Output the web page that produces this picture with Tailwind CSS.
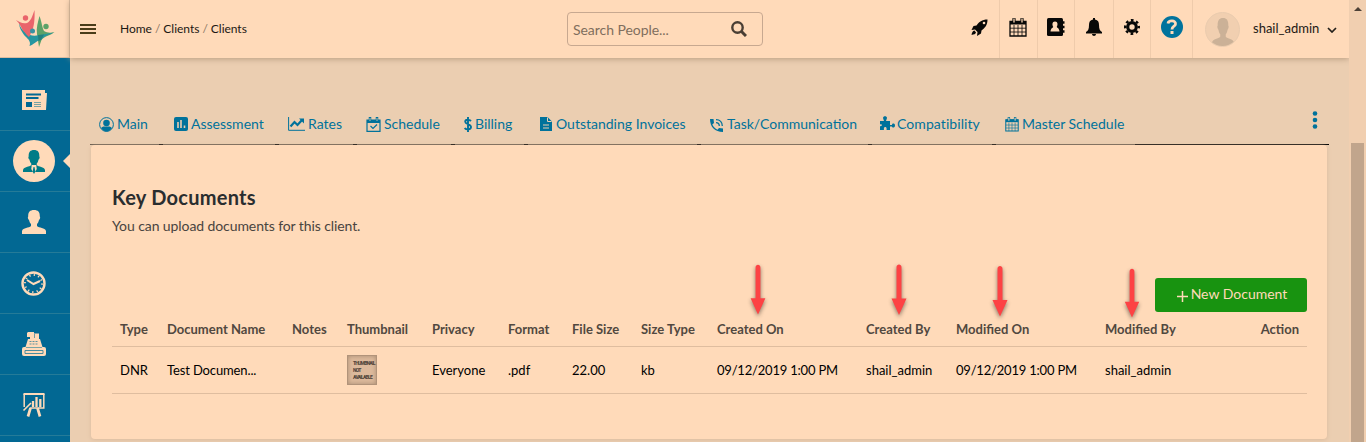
<!DOCTYPE html>
<html lang="en">
<head>
<meta charset="utf-8">
<title>Key Documents</title>
<script src="https://cdn.jsdelivr.net/npm/@tailwindcss/browser@4"></script>
</head>
<body class="relative h-[442px] w-[1366px] overflow-hidden bg-[#ebceb1] font-['Lato',sans-serif] text-sm text-black">
<svg class="hidden">
  <symbol id="person" viewBox="0 0 24 24"><path d="M12 0C8 0 6 2 6.200 6.500C5.400 7 6 9.500 7 10C7.500 12 8 13 9 14V16C7 18 1 17.500 0 21V24H24V21C23 17.500 17 18 15 16V14C16 13 16.500 12 17 10C18 9.500 18.600 7 17.800 6.500C18 2 16 0 12 0Z"/></symbol>
  <symbol id="arrow" viewBox="0 0 16 52"><path d="M5.500 3.500C5.500 0 10.500 0 10.500 3.500V35H15.500L8 51.500L.5 35H5.500Z" fill="#fd4244"/></symbol>
  <symbol id="calendar" viewBox="0 0 18 19"><path d="M1 3.500H17V18H1Z" fill="none" stroke="currentColor" stroke-width="1.300"/><path d="M1 3H17V6.500H1Z"/><path d="M1 10.200H17M1 14H17M5 7V18M9 7V18M13 7V18" stroke="currentColor" fill="none" stroke-width=".8"/><path d="M5 1V4M13 1V4" stroke="currentColor" stroke-width="3.200" stroke-linecap="round"/><path d="M5 1V4M13 1V4" stroke="#ffdab9" stroke-width="1.300" stroke-linecap="round"/></symbol>
</svg>

<div class="flex h-full">
  <aside class="flex w-[70px] flex-none flex-col bg-[#026893] text-[#ffdab9]">
    <div class="flex h-[58px] flex-none items-center justify-center border-r border-b border-[#dabb9f] bg-[#ffdab9]">
      <svg class="h-[37px] w-[40px]" viewBox="0 0 40 37">
        <circle cx="10.500" cy="8" r="2.700" fill="#e9646b"/><path d="M1 10C5 12 7 14 12 13C16 11 17 7 19.500 0C20 9 19 17 17 21L13 29L8 21C6 17 5 14 1 10Z" fill="#e9646b"/>
        <circle cx="31" cy="16.500" r="2.700" fill="#5ca268"/><path d="M24.500 6C27 13 27 17 29 21C32 23 36 23 39.500 22C35 26 29 26 26.500 30L24 37L22 24C21 18 23 12 24.500 6Z" fill="#5ca268"/>
        <path d="M4 13C6 20 10 23 15 25C21 27 29 24 39 22.500C31 26 29 26 26 30C22 30 18 35 14.500 36C16 32 14 30 11 27C7 23 4 17 4 13Z" fill="#2696a0"/><path d="M7 15C9 20 12 23 15.500 24.500L14 27C10 24 8 20 7 15Z" fill="#e9646b"/><circle cx="17.500" cy="21" r="2.500" fill="#3b91a2"/><path d="M23 25L29 24.500L26 30L23.500 31Z" fill="#25807d"/>
      </svg>
    </div>
    <nav class="flex flex-col pr-0">
      <div class="flex h-[73px] items-center justify-center border-b border-[#257b98] pt-[11px] pr-[1px]">
        <svg class="h-[20px] w-[25px]" viewBox="0 0 25 20" fill="currentColor"><path d="M0 0H23V3H25L24 20H0Z"/><path d="M4 4.500H19M4 8H16.500" stroke="#026893" stroke-width="1.800"/><path d="M4 12H10V17H4Z" fill="#026893"/><path d="M12 12.500H19M12 14.500H19M12 16.500H19" stroke="#77a2a4" stroke-width="1"/></svg>
      </div>
      <div class="flex h-[61px] items-center justify-between border-b border-[#257b98] pl-[13px]">
        <div class="flex size-[42px] items-center justify-center rounded-full bg-[#ffdab9]">
          <svg class="mt-[2px] h-[24px] w-[22px] text-[#007c87]" viewBox="0 0 24 24" preserveAspectRatio="none" fill="currentColor"><path d="M12 0C8 0 6 2 6.200 6.500C5.400 7 6 9 7 9.500C7.500 11.500 8 12.500 9 13.500V15C7 17 1 16.500 0 20V22H24V20C23 16.500 17 17 15 15V13.500C16 12.500 16.500 11.500 17 9.500C18 9 18.600 7 17.800 6.500C18 2 16 0 12 0Z"/><path d="M9.500 15L9 19L12 24L15 19L14.500 15Z" fill="#ffdab9"/><path d="M11.500 17H12.500L13.500 21.500L12 24L10.500 21.500Z"/></svg>
        </div>
        <div class="h-0 w-0 border-y-[7px] border-r-[7px] border-y-transparent border-r-[#ffdab9]"></div>
      </div>
      <div class="flex h-[61px] items-center justify-center border-b border-[#257b98] pr-[2px]"><svg class="size-[24px]" fill="currentColor"><use href="#person"/></svg></div>
      <div class="flex h-[61px] items-center justify-center border-b border-[#257b98] pr-[3px]">
        <svg class="size-[25px]" viewBox="0 0 25 25" fill="none" stroke="currentColor"><circle cx="12.500" cy="12.500" r="11" stroke-width="2.400"/><circle cx="12.500" cy="12.500" r="8.500" stroke-width="2" stroke-dasharray="1.200 3.250"/><path d="M6 9L12.500 13L19 10" stroke-width="2"/></svg>
      </div>
      <div class="flex h-[61px] items-center justify-center border-b border-[#257b98] pr-[2px]">
        <svg class="size-[24px]" viewBox="0 0 24 24" fill="currentColor"><path d="M6 0H12V1.500H17V7H18L20.500 15H3.500L6 7H8V5H5V1Z"/><rect y="15" width="24" height="9" rx="2"/><path d="M3 18.500H21V21.500H3Z" fill="none" stroke="#4a8a9d"/><path d="M12.500 2V6" stroke="#4a8a9d" stroke-width=".8"/><path d="M7.500 9.500H16.500M7.500 12H16.500" stroke="#5b929f" stroke-dasharray="2 1"/><path d="M4 15.500H20" stroke="#7aa5a4"/></svg>
      </div>
      <div class="flex h-[61px] items-center justify-center border-b border-[#257b98] pr-[2px]">
        <svg class="size-[24px]" viewBox="0 0 24 24" fill="none" stroke="currentColor"><path d="M1.500 1H22.500" stroke-width="2"/><path d="M21.800 1V15H8" stroke-width="1.500"/><path d="M2.200 1V14" stroke-width="1.500"/><path d="M1.500 17.500L9 10" stroke-width="1.600"/><path d="M8.500 15L6 23.500M15.500 15L18 23.500" stroke-width="2.700"/><path d="M11 14V8M14.500 14V4M18.300 14V6" stroke-width="2.300"/></svg>
      </div>
      <div class="h-[7px] bg-[#026893]"></div>
    </nav>
  </aside>

  <div class="flex w-[1279px] flex-none flex-col">
    <header class="flex h-[58px] flex-none items-center bg-[#ffdab9] shadow-[0_1px_6px_#b99d80]">
      <svg class="ml-[10px] h-[10px] w-[16px]" viewBox="0 0 16 10" stroke="#4a3c19" stroke-width="2"><path d="M0 1H16M0 5H16M0 9H16"/></svg>
      <div class="ml-[24px] w-[447px] text-[12px] leading-4 tracking-[-0.03px] text-[#1c1814]">Home <span class="text-[#8b7765]">/</span> Clients <span class="text-[#8b7765]">/</span> Clients</div>
      <div class="flex h-[34px] w-[196px] items-center justify-between rounded-[4px] border border-[#c7a890] pr-[15px] pl-[5px] text-[14px] text-[#806e5d]">
        <span class="pt-[2px] tracking-[-0.05px]">Search People...</span>
        <svg class="size-[16px]" viewBox="0 0 16 16" fill="none" stroke="#493e34"><circle cx="6.500" cy="6.500" r="5.200" stroke-width="2.400"/><path d="M10.500 10.500L15 15" stroke-width="3"/></svg>
      </div>
      <div class="ml-[197px] flex h-[58px] items-center text-[#080807]">
        <div class="flex h-full w-[40px] items-center border-r border-[#efcbab] pl-[11px] pb-[3px]">
          <svg class="size-[17px]" viewBox="0 0 17 17" fill="currentColor"><path d="M16.500 .5C11 .5 8 3 5.500 6.500L2.500 7L.5 11L4 10.500L6.500 13L6 17L10 14.500L10.500 11.500C14 9 16.500 6 16.500 .5Z"/><path d="M3.500 11.500C1.500 12 1 13.500 .5 16C3 15.500 4.500 15 5 13.500Z"/><circle cx="13" cy="4" r="1.300" fill="#ffdab9"/></svg>
        </div>
        <div class="flex h-full w-[38px] items-center justify-center border-r border-[#efcbab] pr-px pb-[4px]"><svg class="h-[19px] w-[18px]" fill="currentColor"><use href="#calendar"/></svg></div>
        <div class="flex h-full w-[37px] items-center justify-center border-r border-[#efcbab] pb-[4px]">
          <svg class="size-[18px]" viewBox="0 0 18 18" fill="currentColor"><rect width="16" height="18" rx="1.500"/><path d="M15 4.500H17.500M15 9H17.500M15 13.500H17.500" stroke="currentColor" stroke-width="2.600"/><path d="M8 3.500C5 3.500 5 7 6.300 9C5.500 10 4 10 3.500 13.500H12.500C12 10 10.500 10 9.700 9C11 7 11 3.500 8 3.500Z" fill="#ffdab9"/></svg>
        </div>
        <div class="flex h-full w-[39px] items-center justify-center border-r border-[#efcbab] pb-[4px]">
          <svg class="h-[18px] w-[16px]" viewBox="0 0 16 18" fill="currentColor"><path d="M7 0H9V1.500C12 2 13 4 13 7C13 11 14 13 16 14V15.500H0V14C2 13 3 11 3 7C3 4 4 2 7 1.500ZM6 16H10C10 18.500 6 18.500 6 16Z"/></svg>
        </div>
        <div class="flex h-full w-[37px] items-center justify-center border-r border-[#efcbab] pb-[4px]">
          <svg class="size-[16px]" viewBox="0 0 16 16"><circle cx="8" cy="8" r="4.300" fill="none" stroke="currentColor" stroke-width="3.200"/><circle cx="8" cy="8" r="6.800" fill="none" stroke="currentColor" stroke-width="2.400" stroke-dasharray="2.700 2.641" stroke-dashoffset="1.350"/></svg>
        </div>
        <div class="flex h-full w-[42px] items-center justify-center border-r border-[#efcbab] pb-[4px]">
          <svg class="size-[22px]" viewBox="0 0 22 22"><circle cx="11" cy="11" r="11" fill="#00739d"/><path d="M7 7.500C7.500 4 15 4 14.500 8C14.500 10.500 11 10 11 13.500" fill="none" stroke="#ffdab9" stroke-width="2.800"/><path d="M9.500 15H12.500V18H9.500Z" fill="#ffdab9"/></svg>
        </div>
        <div class="ml-[12px] flex size-[35px] items-end justify-center overflow-hidden rounded-full border border-[#eaccaf] bg-[#f1cfb0]"><svg class="h-[28px] w-[22px] text-[#cbb197]" viewBox="0 0 24 24" preserveAspectRatio="none" fill="currentColor"><use href="#person"/></svg></div>
        <span class="ml-[13px] w-[74px] pb-[2px] text-[13px] text-[#1c1814]">shail_admin</span>
        <svg class="mt-[1px] h-[6px] w-[10px]" viewBox="0 0 10 6" fill="none" stroke="#24201b" stroke-width="1.700"><path d="M1 1L5 5L9 1"/></svg>
      </div>
    </header>

    <div class="flex h-[86px] flex-none items-end pl-[20px] text-[#00729b]">
      <div class="flex h-[40px] w-[69px] flex-none items-center gap-[3px] pl-[9px]"><svg class="size-[15px]" viewBox="0 0 15 15"><circle cx="7.500" cy="7.500" r="6.900" fill="none" stroke="currentColor"/><circle cx="7.500" cy="6" r="3.300" fill="currentColor"/><path d="M2 11C4 9 5 9.500 7.500 9.500S11 9 13 11C10 15.500 5 15.500 2 11Z" fill="currentColor"/></svg><span>Main</span></div>
      <div class="ml-1 flex h-[40px] w-[112px] flex-none items-center gap-[3px] pl-[11px]"><svg class="mb-px size-[14px]" viewBox="0 0 14 14"><rect width="14" height="14" rx="2" fill="currentColor"/><path d="M4 11V5M7 11V3M10.500 11V8.500" stroke="#ebceb1" stroke-width="1.600"/></svg><span class="whitespace-nowrap">Assessment</span></div>
      <div class="ml-1 flex h-[40px] w-[74px] flex-none items-center gap-[3px] pl-[9px]"><svg class="h-[14px] w-[17px]" viewBox="0 0 17 14" fill="none" stroke="currentColor"><path d="M.6 0V13.300H17"/><path d="M2.500 9.500L6.500 5L9.500 8L14 3" stroke-width="2.200"/><path d="M11 1.500H16V6.500Z" fill="currentColor" stroke="none"/></svg><span>Rates</span></div>
      <div class="ml-1 flex h-[40px] w-[94px] flex-none items-center gap-[3px] pl-[9px]"><svg class="size-[15px]" viewBox="0 0 15 15" fill="none" stroke="currentColor"><path d="M1 3H14V14.300H1Z" stroke-width="1.200"/><path d="M1 4.500H14" stroke-width="3"/><path d="M4 0V4M11 0V4" stroke-width="2.500"/><path d="M4 1V4M11 1V4" stroke="#ebceb1" stroke-width=".8"/><path d="M4.500 9L7 11.500L11 7.500" stroke-width="1.200"/></svg><span>Schedule</span></div>
      <div class="ml-1 flex h-[40px] w-[69px] flex-none items-center gap-[3px] pl-[9px]"><svg class="h-[15px] w-[8px]" viewBox="0 0 8 15" fill="none" stroke="currentColor" stroke-width="1.900"><path d="M4 0V15M7 4C5.500 2.500 1.200 2 1.200 4.700C1.200 7.500 7 6.700 7 10C7 13 2 12.500 .7 11"/></svg><span>Billing</span></div>
      <div class="ml-1 flex h-[40px] w-[169px] flex-none items-center gap-[4px] pl-[12px]"><svg class="mb-px h-[14px] w-[12px]" viewBox="0 0 12 14"><path d="M0 0H7.500L12 4.500V14H0Z" fill="currentColor"/><path d="M7.500 .5V4.500H11.500M3 8H9M3 11H9" stroke="#ebceb1" fill="none"/></svg><span class="whitespace-nowrap">Outstanding Invoices</span></div>
      <div class="ml-1 flex h-[40px] w-[167px] flex-none items-center gap-[4px] pl-[9px]"><svg class="mt-[3px] size-[13px]" viewBox="0 0 13 13"><path d="M0 0H3.500L4 4L2.300 5.500C3.500 8 5 9.500 7.500 10.700L9 9L13 9.500V13C5 13 0 8 0 0Z" fill="currentColor"/><path d="M6 .7C10 .7 12.300 3 12.300 7M6 3.700C8.500 3.700 9.300 5 9.300 7" fill="none" stroke="currentColor" stroke-width="1.300"/></svg><span class="whitespace-nowrap">Task/Communication</span></div>
      <div class="ml-1 flex h-[40px] w-[120px] flex-none items-center gap-[2px] pl-[8px]"><svg class="mb-[2px] size-[15px]" viewBox="0 0 15 15" fill="currentColor"><path d="M0 5H4L3 2C3 -.5 7 -.5 7 2L6 5H10V9H12C12 7 15 7 15 9.500S12 12 12 10.500H10V14H6.500C7.500 10 3 10 4 14H0V10C2.500 11 2.500 7.500 0 8.500Z"/></svg><span class="tracking-[0.08px]">Compatibility</span></div>
      <div class="ml-1 flex h-[40px] w-[139px] flex-none items-center gap-[3px] pl-[9px]"><svg class="h-[15px] w-[14px]" viewBox="0 0 18 19" fill="currentColor"><use href="#calendar"/></svg><span class="whitespace-nowrap">Master Schedule</span></div>
      <svg class="mb-[15px] ml-[177px] h-[18px] w-[6px]" viewBox="0 0 6 18" fill="currentColor"><circle cx="3" cy="2.500" r="2.300"/><circle cx="3" cy="9" r="2.300"/><circle cx="3" cy="15.500" r="2.300"/></svg>
    </div>
    <div class="ml-[20px] flex h-px w-[1239px] flex-none gap-1 bg-black">
      <i class="w-[69px] bg-[#665a4d]"></i><i class="w-[112px] bg-[#665a4d]"></i><i class="w-[74px] bg-[#665a4d]"></i><i class="w-[94px] bg-[#665a4d]"></i><i class="w-[69px] bg-[#665a4d]"></i><i class="w-[169px] bg-[#665a4d]"></i><i class="w-[167px] bg-[#665a4d]"></i><i class="w-[120px] bg-[#665a4d]"></i><i class="w-[139px] bg-[#665a4d]"></i>
    </div>

    <main class="ml-[21px] h-[294px] w-[1236px] flex-none rounded-[4px] bg-[#ffdab9] pr-[20px] pl-[21px] shadow-[0_1px_4px_#dabb9e]">
      <h1 class="pt-[40px] text-[20px] leading-[25px] font-bold tracking-[0.25px] text-[#2a2d2f]">Key Documents</h1>
      <p class="mt-[6px] text-[14px] leading-5 tracking-[-0.09px] text-[#494440]">You can upload documents for this client.</p>
      <div class="mt-[42px] flex justify-end">
        <button class="flex h-[34px] w-[152px] items-center justify-center rounded-[3px] bg-[#189310] pb-[2px] pl-[2px] text-[14px] text-[#ffdab9]"><svg class="mt-[4px] mr-[3px] size-[11px]" viewBox="0 0 11 11" stroke="currentColor" stroke-width="1.500"><path d="M0 5.500H11M5.500 0V11"/></svg>New Document</button>
      </div>
      <div class="grid h-[35px] grid-cols-[47px_125px_55px_85px_76px_64px_69px_76px_149px_90px_149px_1fr_auto] items-center border-b border-[#dfbd9f] px-2 text-[13px] font-bold whitespace-nowrap text-[#514840]">
        <span>Type</span><span>Document Name</span><span>Notes</span><span>Thumbnail</span><span>Privacy</span><span>Format</span><span>File Size</span><span>Size Type</span><span>Created On</span><span>Created By</span><span>Modified On</span><span>Modified By</span><span>Action</span>
      </div>
      <div class="grid h-[47px] grid-cols-[47px_125px_55px_85px_76px_64px_69px_76px_149px_90px_149px_1fr] items-center border-b border-[#dfbd9f] px-2 text-[13px] whitespace-nowrap">
        <span>DNR</span><span class="tracking-[-0.13px]">Test Documen...</span><span></span>
        <div class="flex size-[30px] flex-col justify-center border border-[#b1937a] bg-[#dcb99b] pl-[5px] font-['Roboto',sans-serif] text-[5px] leading-[7px] font-black tracking-[-0.8px] text-[#55483e] shadow-[inset_0_0_4px_#a88c73]"><span>THUMBNAIL</span><span>NOT</span><span>AVAILABLE</span></div>
        <span>Everyone</span><span>.pdf</span><span>22.00</span><span>kb</span><span class="tracking-[-0.2px]">09/12/2019 1:00 PM</span><span>shail_admin</span><span class="tracking-[-0.2px]">09/12/2019 1:00 PM</span><span>shail_admin</span>
      </div>
    </main>
  </div>

  <div class="flex w-[17px] flex-none flex-col items-center bg-[#f1cfb0]">
    <div class="mt-[7px] h-0 w-0 border-x-[4px] border-b-[4px] border-x-transparent border-b-[#4c4137]"></div>
    <div class="mt-[132px] w-[13px] flex-1 bg-[#c1a58c]"></div>
  </div>
</div>

<svg class="absolute top-[264px] left-[749.5px] h-[51px] w-[16px] drop-shadow-[0_2px_2px_#00000077]"><use href="#arrow"/></svg>
<svg class="absolute top-[263px] left-[890.5px] h-[53px] w-[16px] drop-shadow-[0_2px_2px_#00000077]"><use href="#arrow"/></svg>
<svg class="absolute top-[265px] left-[991.5px] h-[52px] w-[16px] drop-shadow-[0_2px_2px_#00000077]"><use href="#arrow"/></svg>
<svg class="absolute top-[268px] left-[1123.5px] h-[50px] w-[16px] drop-shadow-[0_2px_2px_#00000077]"><use href="#arrow"/></svg>
</body>
</html>
